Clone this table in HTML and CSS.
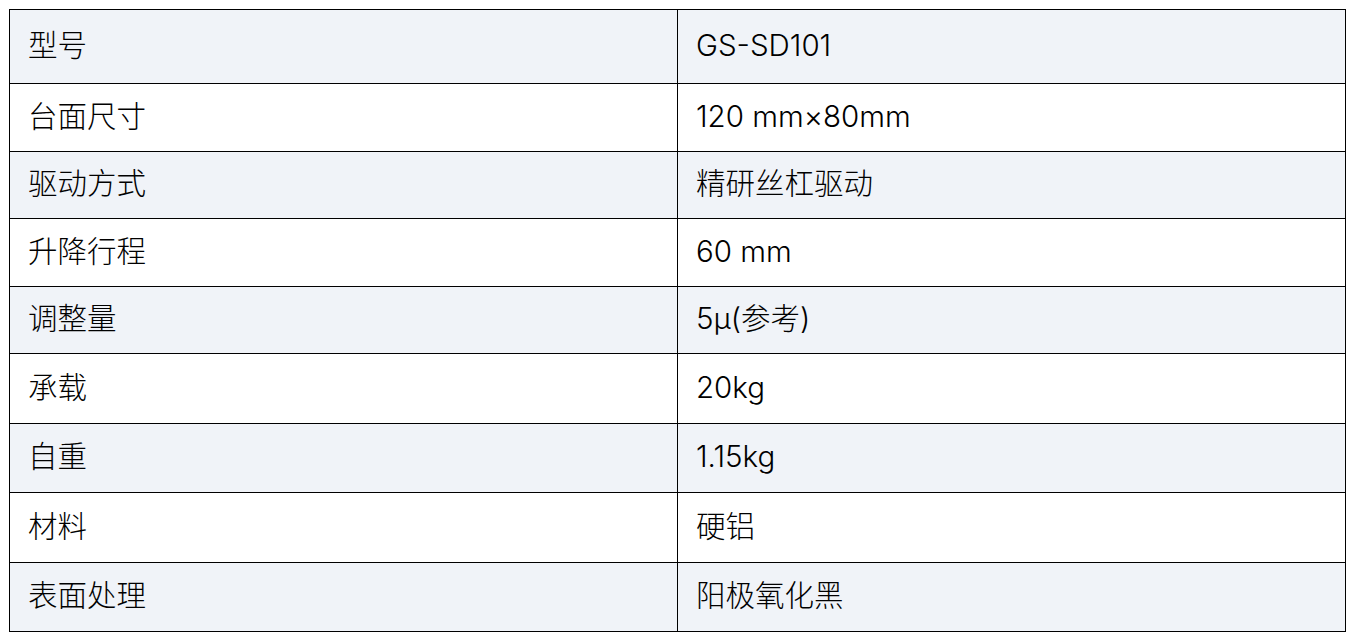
FILE: index.html
```html
<!DOCTYPE html>
<html lang="zh">
<head>
<meta charset="utf-8">
<link rel="stylesheet" href="styles.css">
</head>
<body>
<table class="spec">
  <tr class="r1"><td>型号</td><td>GS-SD101</td></tr>
  <tr class="r2"><td>台面尺寸</td><td>120 mm×80mm</td></tr>
  <tr class="r3"><td>驱动方式</td><td>精研丝杠驱动</td></tr>
  <tr class="r4"><td>升降行程</td><td>60 mm</td></tr>
  <tr class="r5"><td>调整量</td><td>5μ(参考)</td></tr>
  <tr class="r6"><td>承载</td><td>20kg</td></tr>
  <tr class="r7"><td>自重</td><td>1.15kg</td></tr>
  <tr class="r8"><td>材料</td><td>硬铝</td></tr>
  <tr class="r9"><td>表面处理</td><td>阳极氧化黑</td></tr>
</table>
</body>
</html>
```
FILE: styles.css
```css
html, body {
  margin: 0;
  padding: 0;
  background: #ffffff;
}
body {
  padding: 9px 0 0 9px;
  font-family: Inter, "Noto Sans CJK SC", sans-serif;
  font-weight: 300;
  color: #000;
}
.spec {
  border-collapse: collapse;
  width: 1337px;
  table-layout: fixed;
  font-size: 29.5px;
}
.spec td {
  border: 1px solid #000;
  padding: 0 0 2px 18px;
  vertical-align: middle;
  line-height: 1;
}
.spec td:first-child { width: 649px; }
.spec tr:nth-child(odd) { background: #f0f3f8; }
.r1 { height: 74px; }
.r2 { height: 68px; }
.r3 { height: 67px; }
.r4 { height: 68px; }
.r5 { height: 67px; }
.r6 { height: 70px; }
.r7 { height: 69px; }
.r8 { height: 70px; }
.r9 { height: 69px; }
```
